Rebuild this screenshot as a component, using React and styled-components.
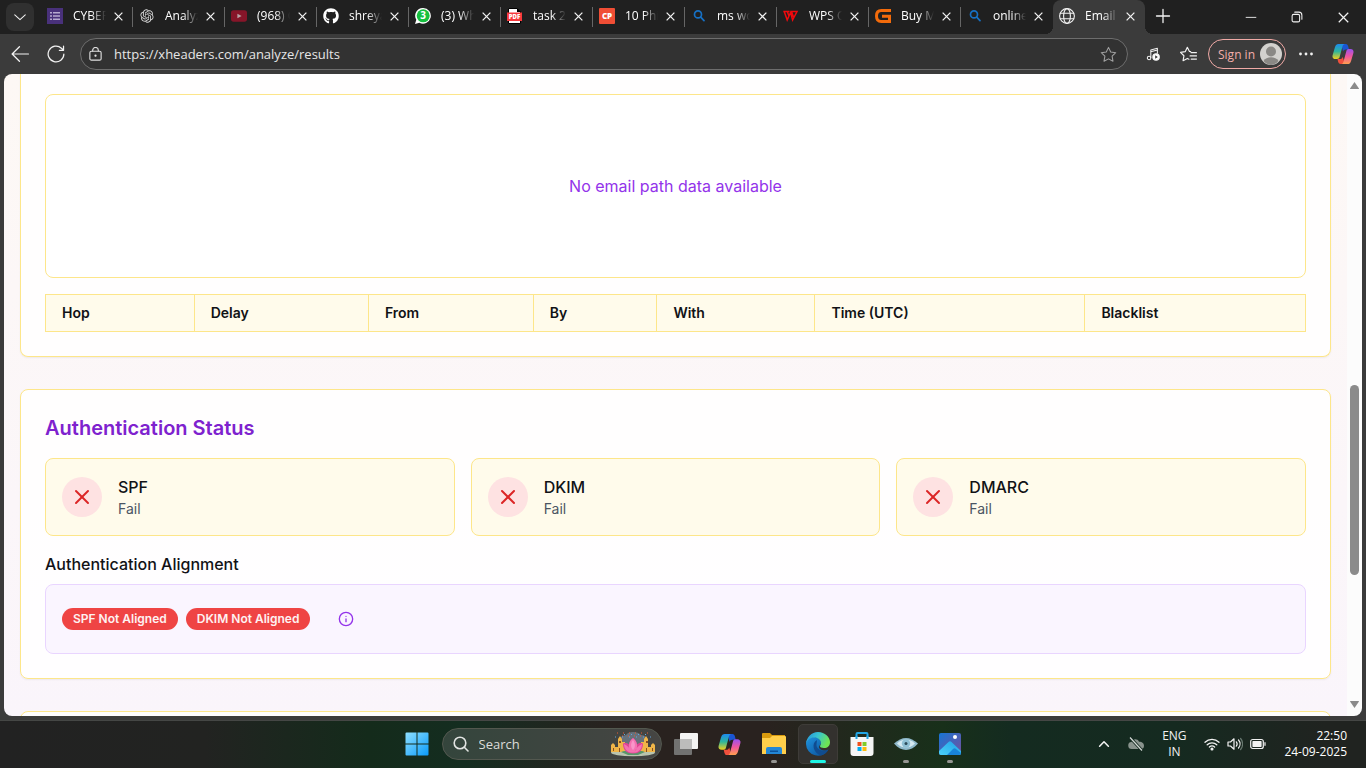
import React from "react";
import styled, { createGlobalStyle, css } from "styled-components";
import { FaGithub } from "react-icons/fa";
import { RiOpenaiFill } from "react-icons/ri";
import { X, Info } from "lucide-react";

const uiFont = `"Segoe UI", "Open Sans", "Noto Sans", sans-serif`;
const pageFont = `Inter, "Open Sans", sans-serif`;

const Global = createGlobalStyle`
  *, *::before, *::after { box-sizing: border-box; }
  body { margin: 0; background: #3b3b3b; font-family: ${uiFont}; }
  button, input { font: inherit; color: inherit; }
  h2, h3, p { margin: 0; }
  svg { display: block; flex: none; }
`;

const Screen = styled.div`
  display: flex;
  flex-direction: column;
  height: 100vh;
  overflow: hidden;
`;

const PlainButton = styled.button`
  display: flex;
  align-items: center;
  justify-content: center;
  flex: none;
  padding: 0;
  border: 0;
  background: transparent;
  color: #f2f2f2;
`;

/* ---------- tab strip ---------- */

const TabStrip = styled.header`
  display: flex;
  flex: none;
  height: 34px;
  padding-left: 6px;
  background: #202020;
  color: #f2f2f2;
`;

const TabMenuButton = styled(PlainButton)`
  width: 28px;
  height: 28px;
  margin: 3px 7px 0 0;
  border-radius: 8px;
  background: #303030;
`;

const Tab = styled.div`
  position: relative;
  display: flex;
  align-items: center;
  flex: none;
  width: 92px;
  height: 34px;
  padding: 0 9px 2px 6px;

  ${(p) =>
    p.$active
      ? css`
          border-radius: 8px 8px 0 0;
          background: #3b3b3b;
          &::before,
          &::after {
            content: "";
            position: absolute;
            bottom: 0;
            width: 8px;
            height: 8px;
          }
          &::before {
            left: -8px;
            background: radial-gradient(circle at 0 0, transparent 8px, #3b3b3b 8px);
          }
          &::after {
            right: -8px;
            background: radial-gradient(circle at 100% 0, transparent 8px, #3b3b3b 8px);
          }
        `
      : p.$divided &&
        css`
          &::after {
            content: "";
            position: absolute;
            right: 0;
            top: 7px;
            width: 1px;
            height: 20px;
            background: #666;
          }
        `}
`;

const TabTitle = styled.button`
  flex: 1;
  min-width: 0;
  margin-left: 10px;
  padding: 0;
  border: 0;
  overflow: hidden;
  background: transparent;
  color: #fff;
  font-size: 12px;
  line-height: 16px;
  text-align: left;
  white-space: nowrap;
  mask-image: linear-gradient(90deg, #000 55%, transparent);
`;

const TabClose = styled(PlainButton)`
  width: 12px;
  height: 16px;
  margin-left: 6px;
`;

const NewTab = styled(PlainButton)`
  width: 36px;
  height: 32px;
`;

const WindowControls = styled.div`
  display: flex;
  margin-left: auto;
`;

const WindowButton = styled(PlainButton)`
  width: 46px;
  height: 34px;
`;

/* ---------- address row ---------- */

const Toolbar = styled.nav`
  display: flex;
  align-items: center;
  flex: none;
  height: 40px;
  padding: 0 4px 0 2px;
  background: #3b3b3b;
`;

const NavButton = styled(PlainButton)`
  width: ${(p) => p.$width || 36}px;
  height: 32px;
`;

const AddressBar = styled.div`
  display: flex;
  align-items: center;
  flex: 1;
  min-width: 0;
  height: 32px;
  margin: 0 8px 0 6px;
  padding: 0 10px 0 7px;
  border: 1px solid #6d6d6d;
  border-radius: 16px;
  background: #323232;
`;

const AddressInput = styled.input`
  flex: 1;
  min-width: 0;
  height: 24px;
  margin-left: 11px;
  padding: 0;
  border: 0;
  outline: 0;
  background: transparent;
  color: #e6e6e6;
  font-size: 13px;
`;

const SignIn = styled.button`
  display: flex;
  align-items: center;
  justify-content: space-between;
  flex: none;
  width: 78px;
  height: 30px;
  margin: 0 2px;
  padding: 0 3px 0 9px;
  border: 1px solid #f0aaa6;
  border-radius: 15px;
  background: transparent;
  color: #f3aeaa;
  font-size: 12px;
`;

/* ---------- web page ---------- */

const Viewport = styled.div`
  display: flex;
  flex: 1;
  min-height: 0;
  margin: 0 4px 4px;
  border-radius: 8px;
  overflow: hidden;
`;

const Page = styled.main`
  display: flex;
  flex-direction: column;
  gap: 32px;
  flex: 1;
  min-width: 0;
  padding: 0 16px;
  overflow: hidden;
  background: linear-gradient(180deg, #fdf8f5, #faf5fb);
  color: #111216;
  font-family: ${pageFont};
`;

const Card = styled.section`
  flex: none;
  padding: 24px;
  border: 1px solid #fde68a;
  border-radius: 8px;
  background: rgba(255, 255, 255, 0.85);
  box-shadow: 0 1px 2px rgba(0, 0, 0, 0.06);

  ${(p) =>
    p.$continued &&
    css`
      padding-top: 20px;
      border-top: 0;
      border-radius: 0 0 8px 8px;
    `}
`;

const PathPanel = styled.div`
  display: flex;
  align-items: center;
  justify-content: center;
  height: 184px;
  margin-bottom: 16px;
  border: 1px solid #fde68a;
  border-radius: 8px;
  background: #fff;
  color: #9333ea;
  font-size: 16px;
  line-height: 24px;
`;

const HopTable = styled.table`
  width: 100%;
  border-collapse: collapse;
  background: #fffbeb;
  font-size: 14px;
  line-height: 20px;

  th {
    padding: 8px 16px;
    border: 1px solid #fde68a;
    font-weight: 600;
    text-align: left;
  }
`;

const CardTitle = styled.h2`
  margin-bottom: 16px;
  color: #7e22ce;
  font-size: 20px;
  font-weight: 600;
  line-height: 28px;
`;

const StatusGrid = styled.div`
  display: grid;
  grid-template-columns: repeat(3, 1fr);
  gap: 16px;
  margin-bottom: 16px;
`;

const StatusCard = styled.article`
  display: flex;
  align-items: center;
  gap: 16px;
  padding: 16px;
  border: 1px solid #fde68a;
  border-radius: 8px;
  background: #fffbeb;
`;

const StatusIcon = styled.span`
  display: flex;
  align-items: center;
  justify-content: center;
  width: 40px;
  height: 40px;
  border-radius: 50%;
  background: #fee2e2;
  color: #dc2626;
`;

const Subheading = styled.h3`
  font-size: 16px;
  font-weight: 500;
  line-height: 24px;
  margin-bottom: ${(p) => (p.$spaced ? 8 : 0)}px;
`;

const StatusText = styled.p`
  color: #4b5563;
  font-size: 14px;
  line-height: 20px;
`;

const AlignmentPanel = styled.div`
  display: flex;
  align-items: center;
  gap: 8px;
  padding: 16px;
  border: 1px solid #e9d5ff;
  border-radius: 8px;
  background: #faf5ff;
`;

const Badge = styled.span`
  padding: 3px 11px;
  border-radius: 11px;
  background: #ef4444;
  color: #fef2f2;
  font-size: 12px;
  font-weight: 600;
  line-height: 16px;
`;

const InfoButton = styled(PlainButton)`
  width: 40px;
  height: 36px;
  margin-left: 8px;
  color: #9333ea;
`;

const ScrollTrack = styled.div`
  display: flex;
  flex-direction: column;
  align-items: center;
  flex: none;
  width: 15px;
  padding: 8px 0;
  background: #fcfcfc;
`;

const ScrollSpace = styled.div`
  flex: ${(p) => p.$grow};
`;

const ScrollThumb = styled.div`
  flex: 190;
  width: 9px;
  border-radius: 5px;
  background: #8b8b8b;
`;

/* ---------- taskbar ---------- */

const Taskbar = styled.footer`
  display: grid;
  grid-template-columns: 1fr auto 1fr;
  align-items: center;
  flex: none;
  height: 48px;
  padding-bottom: 1px;
  border-top: 1px solid #454745;
  background: linear-gradient(
    90deg,
    #222 0%,
    #222321 15%,
    #142b1b 27%,
    #142d20 34%,
    #29221f 45%,
    #29221f 56%,
    #18301a 69%,
    #142b20 74%,
    #152a20 86%,
    #202320 97%
  );
`;

const Apps = styled.div`
  grid-column: 2;
  display: flex;
  align-items: center;
`;

const AppButton = styled(PlainButton)`
  position: relative;
  width: 44px;
  height: 40px;

  ${(p) =>
    p.$active &&
    css`
      &::before {
        content: "";
        position: absolute;
        inset: 0 2px;
        border: 1px solid #3e3c38;
        border-radius: 5px;
        background: #33312e;
      }
    `}

  svg {
    position: relative;
  }

  ${(p) =>
    (p.$running || p.$active) &&
    css`
      &::after {
        content: "";
        position: absolute;
        bottom: 1px;
        width: ${p.$active ? 16 : 6}px;
        height: 3px;
        border-radius: 2px;
        background: ${p.$active ? "#1df5e4" : "#969693"};
      }
    `}
`;

const TaskSearch = styled.label`
  display: flex;
  align-items: center;
  width: 220px;
  height: 32px;
  margin: 0 2px 0 3px;
  padding: 0 5px 0 10px;
  border: 1px solid #53584f;
  border-radius: 16px;
  background: linear-gradient(90deg, #34453c, #464543);

  input {
    flex: 1;
    min-width: 0;
    margin-left: 10px;
    padding: 0;
    border: 0;
    outline: 0;
    background: transparent;
    font-size: 13px;
  }

  input::placeholder {
    color: #dcdcda;
    opacity: 1;
  }
`;

const Tray = styled.div`
  display: flex;
  align-items: center;
  justify-content: flex-end;
  padding-right: 19px;
  color: #fff;
  font-size: 12px;
  line-height: 16px;
`;

const TrayButton = styled(PlainButton)`
  width: 32px;
  height: 40px;
`;

const Language = styled(PlainButton)`
  width: 44px;
  line-height: 16px;
`;

const TrayStatus = styled(PlainButton)`
  gap: 7px;
  margin-left: 8px;
`;

const Clock = styled.time`
  margin-left: 18px;
  text-align: right;
`;

/* ---------- drawings ---------- */

const Cross = ({ size = 9, width = 1.4 }) => (
  <svg width={size} height={size} viewBox="0 0 10 10" fill="none" stroke="currentColor" strokeWidth={width}>
    <path d="M.7.7 9.3 9.3M9.3.7.7 9.3" />
  </svg>
);

const Stroke = ({ size = 16, w = 1.2, color = "currentColor", children }) => (
  <svg
    width={size}
    height={size}
    viewBox="0 0 16 16"
    fill="none"
    stroke={color}
    strokeWidth={w}
    strokeLinecap="round"
    strokeLinejoin="round"
  >
    {children}
  </svg>
);

const FormsIcon = () => (
  <svg width="16" height="16" viewBox="0 0 16 16">
    <path fill="#49317b" d="M0 0h16v16H0z" />
    <path stroke="#b6a9cf" strokeWidth="1.6" d="M3 4.7h2M6 4.7h7M3 8h2M6 8h7M3 11.3h2M6 11.3h7" />
  </svg>
);

const YoutubeIcon = () => (
  <svg width="16" height="16" viewBox="0 0 16 16">
    <rect y="2.3" width="16" height="11.4" rx="2.6" fill="#861529" />
    <path d="m6.4 5.7 4.2 2.3-4.2 2.3z" fill="#b7a2a6" />
  </svg>
);

const WhatsappIcon = () => (
  <svg width="16" height="16" viewBox="0 0 16 16">
    <path fill="#fff" d="M8.2 0A7.8 7.8 0 1 1 4.4 14.7L0 16l1.3-4.2A7.8 7.8 0 0 1 8.2 0z" />
    <circle cx="8.2" cy="7.8" r="6.5" fill="#16c03f" />
    <text x="8.2" y="11.4" textAnchor="middle" fill="#fff" fontSize="10" fontWeight="700" fontFamily="Open Sans, sans-serif">3</text>
  </svg>
);

const PdfIcon = () => (
  <svg width="16" height="16" viewBox="0 0 16 16">
    <path fill="#fff" stroke="#000" d="M1.500.5H10L13.500 4v11.500h-12z" />
    <path fill="#000" d="M10 0l4 4h-4z" />
    <rect y="4.500" width="15" height="8.500" fill="#f8383c" />
    <text x="7.500" y="11" textAnchor="middle" fill="#fff" fontSize="6" fontWeight="800" fontFamily="Open Sans, sans-serif">PDF</text>
  </svg>
);

const CpIcon = () => (
  <svg width="16" height="16" viewBox="0 0 16 16">
    <rect width="16" height="16" rx="1" fill="#f04e35" />
    <text x="8" y="10.9" textAnchor="middle" fill="#fff" fontSize="8" fontWeight="800" fontFamily="Open Sans, sans-serif">CP</text>
  </svg>
);

const BlueSearchIcon = () => (
  <Stroke w={1.7} color="#1670c4">
    <circle cx="7" cy="6.4" r="3.5" />
    <path d="m9.7 9.2 3.3 3.5" />
  </Stroke>
);

const WpsIcon = () => (
  <svg width="16" height="16" viewBox="0 0 16 16" fill="none" stroke="#f0090d" strokeWidth="1.5">
    <path d="M.3 3.500H6.500M1.200 3.500 4.200 12 7.600 4.500 9.600 12 14 3.500H8.500L10.500 9M4.300 3.500 6 8" />
  </svg>
);

const GIcon = () => (
  <svg width="16" height="16" viewBox="0 0 16 16" fill="none" stroke="#f36b0b" strokeWidth="3">
    <path d="M16 2.6H6.3C3 2.6 1.5 4.500 1.500 8s1.500 5.400 4.800 5.400h8.200V8.300H7" />
  </svg>
);

const GlobeIcon = () => (
  <Stroke w={1.1}>
    <circle cx="8" cy="8" r="7.400" />
    <ellipse cx="8" cy="8" rx="3.400" ry="7.400" />
    <path d="M1.300 5.300h13.400M1.300 10.700h13.400" />
  </Stroke>
);

const CopilotIcon = ({ size = 24, id }) => (
  <svg width={size} height={size} viewBox="0 0 24 24">
    <defs>
      <linearGradient id={id + "a"} x1="0" y1="0" x2="0" y2="1">
        <stop offset="0" stopColor="#1c8af0" />
        <stop offset=".5" stopColor="#2fb59b" />
        <stop offset="1" stopColor="#f2cf1c" />
      </linearGradient>
      <linearGradient id={id + "b"} x1="0" y1="0" x2="0" y2="1">
        <stop offset="0" stopColor="#9a50f0" />
        <stop offset=".5" stopColor="#f0569d" />
        <stop offset="1" stopColor="#ffa04d" />
      </linearGradient>
    </defs>
    <path fill="#1a55d4" d="M10 1h5c1.700 0 2.200 1 2.700 2.700L18.500 7H15c-1.600 0-2.400.8-2.900 2.400z" />
    <path fill={`url(#${id}a)`} d="M7 1h7c-1.300 0-2 1-2.500 2.500L8.300 15.400C7.800 17 7 17.500 5.500 17.500H3.800C1.500 17.500 0 15.700.6 13.500L3.200 4.500C4 2 5.200 1 7 1z" />
    <path fill="#f0503d" d="M14 23H9.500c-1.800 0-2.400-1-2.900-2.700L6 17.500h2.700c1.700 0 2.500-.9 3-2.500z" />
    <path fill={`url(#${id}b)`} d="M17 23h-7c1.300 0 2-1 2.500-2.500l3.200-11.900C16.200 7 17 6.500 18.500 6.500h1.700c2.300 0 3.800 1.800 3.200 4L20.800 19.500c-.8 2.500-2 3.500-3.800 3.500z" />
  </svg>
);

const AvatarIcon = () => (
  <svg width="22" height="22" viewBox="0 0 22 22">
    <circle cx="11" cy="11" r="11" fill="#d3d1ce" />
    <circle cx="11" cy="8.500" r="5" fill="#8a8885" />
    <path fill="#8a8885" d="M3.500 18c1.500-2.500 4.300-3.700 7.500-3.700s6 1.200 7.500 3.700A11 11 0 0 1 11 22a11 11 0 0 1-7.500-4z" />
  </svg>
);

const WindowsIcon = () => (
  <svg width="24" height="24" viewBox="0 0 24 24">
    <defs>
      <linearGradient id="win" x1="0" y1="0" x2="1" y2="1">
        <stop offset="0" stopColor="#8fe0ff" />
        <stop offset="1" stopColor="#0a9bfa" />
      </linearGradient>
    </defs>
    <path fill="url(#win)" d="M1.500.5H11.500v11H.5v-10a1 1 0 0 1 1-1zM12.500.5h10a1 1 0 0 1 1 1v10h-11zM.5 12.500h11v11h-10a1 1 0 0 1-1-1zM12.500 12.500h11v10a1 1 0 0 1-1 1h-10z" />
  </svg>
);

const LotusIcon = () => (
  <svg width="46" height="26" viewBox="0 0 46 26">
    <path fill="#66717b" d="M9 11c0-6 4-6 7-7 2-4 12-4 15 0 4 0 7 3 6 8l-6 7H15z" />
    <ellipse cx="23" cy="21.500" rx="22" ry="3.800" fill="#b9c4ae" />
    <path fill="#f0b548" d="M1 21v-7l2-2 2 2v2h3V8l2-3 2 3v3h3v10zM45 21v-7l-2-2-2 2v2h-3V8l-2-3-2 3v3h-3v10z" />
    <path fill="#8b5020" d="M3 17h1v3H3zM9 10h2v2H9zM9 17h1v4H9zM36 10h2v2h-2zM36 17h1v4h-1zM42 17h1v3h-1z" />
    <path fill="#58976a" d="M11 21c4-2 20-2 24 0l-7 3H18z" />
    <path fill="#df4493" d="M23 22.500c-6 0-10-3-10-10 3-1 5 0 6 1 0-3 2-5 4-6.500 2 1.500 4 3.500 4 6.500 1-1 3-2 6-1 0 7-4 10-10 10z" />
    <path fill="#f472b2" d="M23 22c-5-3-6-10 0-15 6 5 5 12 0 15zM14 13c3 1 6 4 8 9-5-1-8-4-8-9zM32 13c-3 1-6 4-8 9 5-1 8-4 8-9z" />
    <path fill="#f995c9" d="M23 19c-2-2-3-6 0-10 3 4 2 8 0 10z" />
    <path stroke="#e75b37" strokeWidth="1.200" strokeDasharray="1 5" d="M7 2h32M12 5h22" />
    <path stroke="#60a5e0" strokeWidth="1.200" strokeDasharray="1 6" d="M14 3.500h22M5 6h36" />
  </svg>
);

const TaskViewIcon = () => (
  <svg width="24" height="24" viewBox="0 0 24 24">
    <path fill="#f3f3f2" d="M7 1h16a1 1 0 0 1 1 1v14a1 1 0 0 1-1 1H6V2a1 1 0 0 1 1-1z" />
    <path fill="#727271" d="M1 7h17v15a1 1 0 0 1-1 1H1a1 1 0 0 1-1-1V8a1 1 0 0 1 1-1z" />
    <path fill="#bcbcbb" d="M6 7h12v10H6z" />
  </svg>
);

const FolderIcon = () => (
  <svg width="24" height="24" viewBox="0 0 24 24">
    <path fill="#d99b0e" d="M1 1h7l2 2h13v5H0V2a1 1 0 0 1 1-1z" />
    <path fill="#ffcf4b" d="M0 6h8l2-2h13a1 1 0 0 1 1 1v17H0z" />
    <path fill="#2387d5" d="M4 22v-5a2 2 0 0 1 2-2h12a2 2 0 0 1 2 2v5z" />
    <path fill="#0c529a" d="M8 18.500h8V20H8z" />
  </svg>
);

const EdgeIcon = () => (
  <svg width="24" height="24" viewBox="0 0 24 24">
    <defs>
      <linearGradient id="edgeTop" x1="0" y1="0" x2="1" y2=".4">
        <stop offset="0" stopColor="#238ddb" />
        <stop offset=".5" stopColor="#37c3d0" />
        <stop offset="1" stopColor="#6ee554" />
      </linearGradient>
      <linearGradient id="edgeLow" x1="0" y1="0" x2="1" y2="1">
        <stop offset="0" stopColor="#1f93df" />
        <stop offset="1" stopColor="#0a4c94" />
      </linearGradient>
    </defs>
    <path fill="url(#edgeLow)" d="M0 12C0 7 4 5 8.500 5c4 0 6.500 3 6.500 6 0 2-2 2.300-2 4 0 2 3 3.500 6 3.500 1.500 0 2.500-.5 3.500-1A12 12 0 0 1 0 12z" />
    <path fill="#104c90" d="M11 8c-6 3-4 13 4 15.500 3-.7 6-3 7.500-6-6 3-12 0-12-4.500 0-2 .5-4 .5-5z" />
    <path fill="url(#edgeTop)" d="M0 12C.5 5 5.500 0 12 0c7 0 12 5.500 12 10 0 4-2.500 6-6 6-2.500 0-4-.7-4-1.700 0-.8 1-1.300 1-3.300 0-3-3-5.500-6.500-5.500C4 5.500 1 8 0 12z" />
  </svg>
);

const StoreIcon = () => (
  <svg width="24" height="24" viewBox="0 0 24 24">
    <path fill="none" stroke="#21a5e5" strokeWidth="2" d="M6.500 6V2a1 1 0 0 1 1-1h9a1 1 0 0 1 1 1v4" />
    <path fill="#f5f5f5" d="M.5 5h23v16a3 3 0 0 1-3 3h-17a3 3 0 0 1-3-3z" />
    <path stroke="#21a5e5" strokeWidth="2" d="M6.500 4v3M17.500 4v3" />
    <path fill="#f1511b" d="M7.500 10h4v4h-4z" />
    <path fill="#80cc28" d="M12.500 10h4v4h-4z" />
    <path fill="#00adef" d="M7.500 15h4v4h-4z" />
    <path fill="#fbbc09" d="M12.500 15h4v4h-4z" />
  </svg>
);

const EyeIcon = () => (
  <svg width="24" height="24" viewBox="0 0 24 24">
    <path fill="#8fb9cb" d="M0 11.500C4 8 8 6 12 6s8 2 12 5.500C20 16 16 18 12 18s-8-2-12-6.500z" />
    <path fill="#d5e9f1" d="M3 11.500C6 8.500 9 7.500 12 7.500s6 1 9 4c-3 3-6 4-9 4s-6-1-9-4z" />
    <circle cx="12" cy="11.500" r="4.200" fill="#8fc0d4" />
    <circle cx="12" cy="11.500" r="1.500" fill="#2c4b59" />
  </svg>
);

const PhotosIcon = () => (
  <svg width="22" height="22" viewBox="0 0 22 22">
    <defs>
      <linearGradient id="photo" x1="0" y1="0" x2="1" y2="1">
        <stop offset="0" stopColor="#1675d5" />
        <stop offset="1" stopColor="#76509c" />
      </linearGradient>
      <linearGradient id="hill" x1="0" y1="1" x2="1" y2="0">
        <stop offset="0" stopColor="#4bd2f8" />
        <stop offset="1" stopColor="#1fa0e8" />
      </linearGradient>
    </defs>
    <rect width="22" height="22" rx="2" fill="url(#photo)" />
    <path fill="url(#hill)" d="M0 18 9.500 9c1-1 2-1 3 0L22 18v2a2 2 0 0 1-2 2H2a2 2 0 0 1-2-2z" />
    <path fill="#1884d8" d="m8 22 6-6c1-1 2-1 3 0l5 4a2 2 0 0 1-2 2z" />
    <circle cx="16" cy="4" r="2" fill="#fff" />
  </svg>
);

/* ---------- data ---------- */

const tabs = [
  { title: "CYBER", icon: <FormsIcon /> },
  { title: "Analyz", icon: <RiOpenaiFill size={16} color="#d8d8d8" /> },
  { title: "(968) C", icon: <YoutubeIcon /> },
  { title: "shreya", icon: <FaGithub size={16} color="#fff" /> },
  { title: "(3) Wh", icon: <WhatsappIcon /> },
  { title: "task 2", icon: <PdfIcon /> },
  { title: "10 Phi", icon: <CpIcon /> },
  { title: "ms wo", icon: <BlueSearchIcon /> },
  { title: "WPS O", icon: <WpsIcon /> },
  { title: "Buy M", icon: <GIcon /> },
  { title: "online", icon: <BlueSearchIcon /> },
  { title: "Email", icon: <GlobeIcon />, active: true },
];

const columns = ["Hop", "Delay", "From", "By", "With", "Time (UTC)", "Blacklist"];
const checks = ["SPF", "DKIM", "DMARC"];

const apps = [
  { name: "Task view", icon: <TaskViewIcon /> },
  { name: "Copilot", icon: <CopilotIcon size={23} id="task" /> },
  { name: "File Explorer", icon: <FolderIcon />, running: true },
  { name: "Microsoft Edge", icon: <EdgeIcon />, active: true },
  { name: "Microsoft Store", icon: <StoreIcon /> },
  { name: "Viewer", icon: <EyeIcon />, running: true },
  { name: "Photos", icon: <PhotosIcon />, running: true },
];

const starPath = "m8 1.300 2.100 4.300 4.700.7-3.400 3.300.8 4.700L8 12.100l-4.200 2.200.8-4.700L1.200 6.300l4.700-.7z";

export default function App() {
  return (
    <Screen>
      <Global />
      <TabStrip>
        <TabMenuButton aria-label="Search tabs">
          <Stroke size={14}><path d="m2 5.500 6 5.500 6-5.500" /></Stroke>
        </TabMenuButton>
        {tabs.map((tab, i) => (
          <Tab key={i} $active={tab.active} $divided={i < tabs.length - 2}>
            {tab.icon}
            <TabTitle>{tab.title}</TabTitle>
            <TabClose aria-label={"Close " + tab.title}><Cross /></TabClose>
          </Tab>
        ))}
        <NewTab aria-label="New tab">
          <Stroke w={1.300}><path d="M8 1.500v13M1.500 8h13" /></Stroke>
        </NewTab>
        <WindowControls>
          <WindowButton aria-label="Minimize">
            <Stroke size={12}><path d="M1.500 8.500h13" /></Stroke>
          </WindowButton>
          <WindowButton aria-label="Restore">
            <Stroke size={12} w={1.400}>
              <rect x="1.500" y="4.500" width="10" height="10" rx="2" />
              <path d="M5 1.500h5.500a4 4 0 0 1 4 4V11" />
            </Stroke>
          </WindowButton>
          <WindowButton aria-label="Close window"><Cross size={11} width={1.1} /></WindowButton>
        </WindowControls>
      </TabStrip>

      <Toolbar>
        <NavButton aria-label="Back">
          <Stroke size={18} w={1.1}><path d="M15.500 8H1M7.500 1.500 1 8l6.500 6.500" /></Stroke>
        </NavButton>
        <NavButton aria-label="Refresh">
          <Stroke size={18} w={1.1}>
            <path d="M15 8a7 7 0 1 1-2.200-5.100L14.500 4.500M14.700 1v3.700H11" />
          </Stroke>
        </NavButton>
        <AddressBar>
          <Stroke size={15} color="#e0e0e0">
            <rect x="2" y="4.500" width="12" height="9.500" rx="1.600" />
            <path d="M5 4.300V3.500a3 3 0 0 1 6 0v.8" />
            <circle cx="8" cy="9.200" r=".6" fill="#e0e0e0" />
          </Stroke>
          <AddressInput aria-label="Address" defaultValue="https://xheaders.com/analyze/results" />
          <Stroke size={17} w={1} color="#a0a0a0"><path d={starPath} /></Stroke>
        </AddressBar>
        <NavButton aria-label="Media control" $width={34}>
          <Stroke size={14}>
            <path d="M5.500 12V3.500L13 1.500V7M5.500 5.500 13 3.500" />
            <circle cx="3.500" cy="12.500" r="2" />
            <circle cx="11.500" cy="11.500" r="3.700" fill="#fff" />
            <path fill="#333" stroke="none" d="m10.500 9.500 3 2-3 2z" />
          </Stroke>
        </NavButton>
        <NavButton aria-label="Favorites">
          <Stroke size={17} w={1.100}>
            <path d="M10 5.300 8.900 5.200 6.900 1.200 4.900 5.300.500 6l3.200 3.200-.8 4.600L6.900 11.700l1.500.7M10.500 6.300h5M9.500 9.300h6M10.500 12.300h5" />
          </Stroke>
        </NavButton>
        <SignIn>Sign in<AvatarIcon /></SignIn>
        <NavButton aria-label="Settings and more">
          <svg width="16" height="4" viewBox="0 0 16 4" fill="#f2f2f2">
            <circle cx="2.500" cy="2" r="1.400" /><circle cx="8" cy="2" r="1.400" /><circle cx="13.500" cy="2" r="1.400" />
          </svg>
        </NavButton>
        <NavButton aria-label="Copilot" $width={38}><CopilotIcon size={22} id="bar" /></NavButton>
      </Toolbar>

      <Viewport>
        <Page>
          <Card $continued>
            <PathPanel>No email path data available</PathPanel>
            <HopTable>
              <thead>
                <tr>{columns.map((c) => <th key={c} scope="col">{c}</th>)}</tr>
              </thead>
            </HopTable>
          </Card>

          <Card>
            <CardTitle>Authentication Status</CardTitle>
            <StatusGrid>
              {checks.map((name) => (
                <StatusCard key={name}>
                  <StatusIcon><X size={24} strokeWidth={2} /></StatusIcon>
                  <div>
                    <Subheading>{name}</Subheading>
                    <StatusText>Fail</StatusText>
                  </div>
                </StatusCard>
              ))}
            </StatusGrid>
            <Subheading $spaced>Authentication Alignment</Subheading>
            <AlignmentPanel>
              <Badge>SPF Not Aligned</Badge>
              <Badge>DKIM Not Aligned</Badge>
              <InfoButton aria-label="About alignment"><Info size={16} /></InfoButton>
            </AlignmentPanel>
          </Card>

          <Card />
        </Page>
        <ScrollTrack>
          <svg width="9" height="7" viewBox="0 0 9 7"><path fill="#8b8b8b" d="M4.500 0 9 6.500Q9 7 8.500 7h-8Q0 7 0 6.500z" /></svg>
          <ScrollSpace $grow={296} />
          <ScrollThumb />
          <ScrollSpace $grow={126} />
          <svg width="9" height="7" viewBox="0 0 9 7"><path fill="#8b8b8b" d="M4.500 7 9 .5Q9 0 8.500 0h-8Q0 0 0 .5z" /></svg>
        </ScrollTrack>
      </Viewport>

      <Taskbar>
        <Apps>
          <AppButton aria-label="Start"><WindowsIcon /></AppButton>
          <TaskSearch>
            <Stroke w={1.600} color="#e2e4e2">
              <circle cx="7" cy="7" r="5.800" /><path d="m11.300 11.300 3.700 3.700" />
            </Stroke>
            <input type="text" aria-label="Search" placeholder="Search" />
            <LotusIcon />
          </TaskSearch>
          {apps.map((app) => (
            <AppButton key={app.name} aria-label={app.name} $running={app.running} $active={app.active}>
              {app.icon}
            </AppButton>
          ))}
        </Apps>
        <Tray>
          <TrayButton aria-label="Show hidden icons">
            <Stroke size={14} w={1.800}><path d="m3 10.500 5-5 5 5" /></Stroke>
          </TrayButton>
          <TrayButton aria-label="OneDrive">
            <svg width="16" height="16" viewBox="0 0 16 16">
              <path fill="#89938d" d="M4 13a3.500 3.500 0 0 1-.5-7C5 2.500 9.500 2.500 11 5.700c3.500 0 5 2 5 4A3.300 3.300 0 0 1 12.700 13z" />
              <path stroke="#152a20" strokeWidth="3" d="m2 1.500 12 13" />
              <path stroke="#d5dbd7" strokeWidth="1.200" d="m2 1.500 12 13" />
            </svg>
          </TrayButton>
          <Language>ENG<br />IN</Language>
          <TrayStatus aria-label="Network, volume and battery">
            <Stroke w={1.300}>
              <path d="M1 6.300a10 10 0 0 1 14 0M3.200 8.700a7 7 0 0 1 9.600 0M5.400 11a4 4 0 0 1 5.200 0" />
              <circle cx="8" cy="13" r=".9" fill="currentColor" />
            </Stroke>
            <Stroke w={1.200}>
              <path d="M1 6h2.500L7 2.800v10.400L3.500 10H1zM9.300 5.800c1 1.300 1 3.100 0 4.400M11.500 4c2 2.300 2 5.700 0 8" />
              <path stroke="#687870" d="M13.600 2.500c2.700 3.100 2.700 7.900 0 11" />
            </Stroke>
            <Stroke w={1.200}>
              <rect x=".7" y="3.500" width="12.600" height="9" rx="2" />
              <path fill="currentColor" d="M3 5.700h8v4.600H3zM15 6.700v2.600" />
            </Stroke>
          </TrayStatus>
          <Clock dateTime="2025-09-24T22:50">22:50<br />24-09-2025</Clock>
        </Tray>
      </Taskbar>
    </Screen>
  );
}
